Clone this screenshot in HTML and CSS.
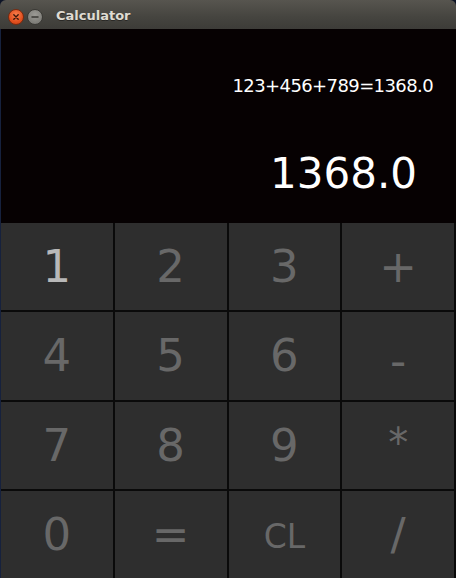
FILE: index.html
```html
<!DOCTYPE html>
<html>
<head>
<meta charset="utf-8">
<link rel="stylesheet" href="styles.css">
</head>
<body>
<div class="window">
  <div class="titlebar">
    <span class="tb-btn close"><svg viewBox="0 0 16 16" width="16" height="16"><path d="M5.5 5.5 L10.5 10.5 M10.5 5.5 L5.5 10.5" stroke="#3b1609" stroke-width="1.6" stroke-linecap="round"/></svg></span>
    <span class="tb-btn min"><svg viewBox="0 0 16 16" width="16" height="16"><path d="M4.5 8 H11.5" stroke="#3a3935" stroke-width="1.6" stroke-linecap="round"/></svg></span>
    <span class="title">Calculator</span>
  </div>
  <div class="display">
    <div class="expr">123+456+789=1368.0</div>
    <div class="result">1368.0</div>
  </div>
  <div class="keys">
    <div class="key focus">1</div>
    <div class="key">2</div>
    <div class="key">3</div>
    <div class="key">+</div>
    <div class="key">4</div>
    <div class="key">5</div>
    <div class="key">6</div>
    <div class="key minus">-</div>
    <div class="key">7</div>
    <div class="key">8</div>
    <div class="key">9</div>
    <div class="key star">*</div>
    <div class="key">0</div>
    <div class="key">=</div>
    <div class="key cl">CL</div>
    <div class="key">/</div>
  </div>
</div>
</body>
</html>
```

FILE: styles.css
```css
html, body {
  margin: 0;
  padding: 0;
  width: 456px;
  height: 578px;
  overflow: hidden;
  background: #0d1426;
}
.window {
  width: 456px;
  height: 578px;
  display: flex;
  flex-direction: column;
  font-family: "DejaVu Sans", sans-serif;
}
.titlebar {
  height: 29px;
  flex: none;
  display: flex;
  align-items: center;
  background: linear-gradient(#57554f, #45443f 60%, #3d3c38);
  border-radius: 6px 6px 0 0;
  padding-left: 8px;
  box-sizing: border-box;
}
.tb-btn {
  width: 16px;
  height: 16px;
  border-radius: 50%;
  display: flex;
  align-items: center;
  justify-content: center;
  box-sizing: border-box;
  margin-top: 4px;
}
.tb-btn svg { display: block; }
.close {
  background: radial-gradient(circle at 50% 35%, #f8804e, #e2501f 60%, #c63d12);
  border: 1px solid #7a2a0f;
}
.min {
  margin-left: 3px;
  background: radial-gradient(circle at 50% 35%, #9b9a95, #7f7e79 70%, #6c6b66);
  border: 1px solid #3a3935;
}
.title {
  margin-left: 13px;
  margin-top: 2px;
  font-weight: bold;
  font-size: 13px;
  color: #dfdbd2;
  text-shadow: 0 1px 0 #2a2926;
}
.display {
  height: 194px;
  flex: none;
  background: #060102;
  border-left: 1px solid #16213d;
  display: flex;
  flex-direction: column;
  align-items: flex-end;
  box-sizing: border-box;
}
.expr {
  margin-top: 48px;
  margin-right: 23px;
  font-size: 18px;
  line-height: 18px;
  letter-spacing: -0.6px;
  color: #ffffff;
}
.result {
  margin-top: 58px;
  margin-right: 39px;
  font-size: 42px;
  line-height: 42px;
  color: #ffffff;
}
.keys {
  flex: none;
  height: 355px;
  display: grid;
  grid-template-columns: repeat(4, 1fr);
  grid-template-rows: repeat(4, 1fr);
  gap: 2px;
  padding: 0 2px 0 0;
  background: #0a0a0a;
  border-left: 1px solid #16213d;
  box-sizing: border-box;
}
.key {
  background: #2e2e2e;
  display: flex;
  align-items: center;
  justify-content: center;
  font-size: 45px;
  line-height: 45px;
  color: #686868;
}
.focus {
  color: #b8b8b8;
}
.cl {
  font-size: 33px;
  padding-top: 4px;
}
.minus {
  padding-top: 10px;
}
.star {
  font-size: 40px;
  padding-bottom: 4px;
}
```
